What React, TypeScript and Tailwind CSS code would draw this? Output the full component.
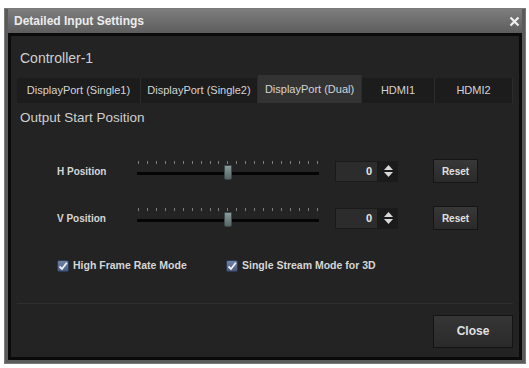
import * as React from "react"

const tabs = [
  { label: "DisplayPort (Single1)", w: "w-[124px]" },
  { label: "DisplayPort (Single2)", w: "w-[117px]" },
  { label: "DisplayPort (Dual)", w: "w-[104px]", active: true },
  { label: "HDMI1", w: "w-[73px]" },
  { label: "HDMI2", w: "w-[78px]" },
]

function Slider() {
  const ticks = Array.from({ length: 21 })
  return (
    <div className="relative h-[24px] w-[182px]">
      <div className="absolute left-0 right-0 top-[2px] flex justify-between px-[1px]">
        {ticks.map((_, i) => (
          <span className="h-[3px] w-[1px] bg-[#7c7c7c]" key={i} />
        ))}
      </div>
      <div className="absolute left-0 right-0 top-[13px] h-[3px] bg-[#050505]" />
      <div className="absolute left-[87px] top-[6px] h-[15px] w-[8px] rounded-b-[2px] border border-[#3c4a4a] bg-gradient-to-b from-[#8a9c9c] to-[#596565]" />
    </div>
  )
}

function NumberField() {
  return (
    <div className="flex h-[21px] items-stretch">
      <div className="flex w-[43px] items-center justify-end border border-[#1a1a1a] bg-[#2c2c2c] pr-[5px] text-[11px] font-bold text-[#e6e6e6]">
        0
      </div>
      <div className="flex w-[20px] flex-col items-center justify-center gap-[2px] bg-[#1b1b1b]">
        <svg height="5" viewBox="0 0 9 5" width="9">
          <path d="M0 5 L4.5 0 L9 5 Z" fill="#d8d8d8" />
        </svg>
        <svg height="5" viewBox="0 0 9 5" width="9">
          <path d="M0 0 L4.5 5 L9 0 Z" fill="#d8d8d8" />
        </svg>
      </div>
    </div>
  )
}

function ResetButton() {
  return (
    <button
      className="flex h-[24px] w-[45px] items-center justify-center border border-[#151515] bg-gradient-to-b from-[#383838] to-[#2a2a2a] text-[10px] font-bold text-[#e0e0e0]"
      type="button"
    >
      Reset
    </button>
  )
}

function PositionRow({ label }: { label: string }) {
  return (
    <div className="flex items-center">
      <span className="w-[120px] shrink-0 pl-[40px] text-[10px] font-bold whitespace-nowrap text-[#d6d6d6]">{label}</span>
      <Slider />
      <div className="ml-[16px]">
        <NumberField />
      </div>
      <div className="ml-[35px]">
        <ResetButton />
      </div>
    </div>
  )
}

function CheckBox({ label }: { label: string }) {
  return (
    <label className="flex items-center gap-[4px]">
      <span className="flex h-[12px] w-[12px] items-center justify-center rounded-[2px] border border-[#2b3a55] bg-gradient-to-b from-[#6f82a6] to-[#4a5b7d]">
        <svg height="10" viewBox="0 0 10 10" width="10">
          <path d="M1.5 5.5 L4 8 L8.8 1.8" fill="none" stroke="#eef2f8" strokeWidth="1.8" />
        </svg>
      </span>
      <span className="text-[10.5px] font-bold text-[#d6d6d6]">{label}</span>
    </label>
  )
}

export default function App() {
  return (
    <div className="h-[368px] w-[529px] bg-white pt-[8px] pl-[4px] [font-family:'Liberation_Sans',Arial,sans-serif]">
      <div className="flex h-[356px] w-[522px] flex-col border border-[#7a7a7a] bg-[#5a5a5a] px-[3px] pb-[3px]">
        <div className="flex h-[24px] items-center justify-between bg-gradient-to-b from-[#7e7e7e] to-[#5d5d5d] pr-[2px] pl-[6px]">
          <span className="text-[12px] font-bold text-[#ececec]">Detailed Input Settings</span>
          <svg height="11" viewBox="0 0 11 11" width="11">
            <path d="M1.5 1.5 L9.5 9.5 M9.5 1.5 L1.5 9.5" stroke="#f0f0f0" strokeWidth="2.2" />
          </svg>
        </div>
        <div className="flex flex-1 flex-col border-[3px] border-[#0a0a0a] bg-[#232323] px-[6px]">
          <div className="mt-[14px] ml-[3px] text-[14px] leading-[17px] text-[#d0d0d0]">Controller-1</div>
          <div className="mt-[8px] flex h-[28px] items-end">
            {tabs.map((t) => (
              <div
                className={`${t.w} flex items-center justify-center border-r border-[#2c2c2c] text-[11px] whitespace-nowrap text-[#d4d4d4] ${
                  t.active ? "h-[28px] bg-[#333333]" : "h-[25px] bg-[#1c1c1c]"
                }`}
                key={t.label}
              >
                {t.label}
              </div>
            ))}
          </div>
          <div className="mt-[7px] ml-[3px] text-[13.5px] leading-[16px] text-[#d0d0d0]">Output Start Position</div>
          <div className="mt-[33px] flex flex-col gap-[23px]">
            <PositionRow label="H Position" />
            <PositionRow label="V Position" />
          </div>
          <div className="mt-[28px] flex items-center pl-[40px]">
            <div className="w-[169px]">
              <CheckBox label="High Frame Rate Mode" />
            </div>
            <CheckBox label="Single Stream Mode for 3D" />
          </div>
          <div className="mt-[29px] h-[1px] bg-[#2e2e2e]" />
          <div className="mt-[11px] flex justify-end">
            <button
              className="flex h-[33px] w-[80px] items-center justify-center border border-[#141414] bg-gradient-to-b from-[#363636] to-[#2a2a2a] text-[12px] font-bold text-[#e0e0e0]"
              type="button"
            >
              Close
            </button>
          </div>
        </div>
      </div>
    </div>
  )
}
